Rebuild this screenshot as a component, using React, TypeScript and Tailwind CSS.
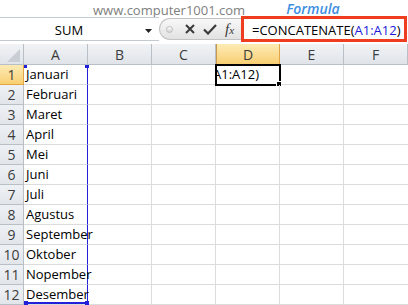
import React from "react";

const columns = ["A", "B", "C", "D", "E", "F"];
const months = [
  "Januari",
  "Februari",
  "Maret",
  "April",
  "Mei",
  "Juni",
  "Juli",
  "Agustus",
  "September",
  "Oktober",
  "Nopember",
  "Desember",
];

const App: React.FC = () => {
  return (
    <div className="w-[408px] h-[305px] overflow-hidden bg-white font-['Open_Sans',sans-serif] text-black">
      {/* caption */}
      <div className="h-[16px] flex items-start pl-[93px] leading-[16px]">
        <span className="mt-[2px] text-[13px] text-[#808080]">www.computer1001.com</span>
        <span className="ml-[41px] mt-[1px] text-[14px] leading-[15px] font-semibold italic text-[#3d8fe2]">Formula</span>
      </div>

      {/* formula bar */}
      <div className="flex h-[28px]">
        <div className="relative mt-[1px] h-[24px] w-[159px] border-y border-[#c5cad0] bg-white">
          <div className="w-[138px] pt-[3px] text-center text-[13px] leading-[18px]">SUM</div>
          <svg className="absolute left-[145px] top-[11px]" width="7" height="4" viewBox="0 0 7 4">
            <path d="M0 0 H7 L3.5 4 Z" fill="#222" />
          </svg>
        </div>
        <div className="mt-[2px] flex h-[22px] w-[82px] items-center rounded-l-[12px] border border-r-0 border-[#c2c2c2] bg-gradient-to-b from-[#f8f8f8] to-[#e2e2e2] pl-[6px]">
          <div className="h-[7px] w-[7px] rounded-full border border-[#bdbdbd] bg-gradient-to-b from-[#ffffff] to-[#d4d4d4]" />
          <svg className="ml-[12px]" width="10" height="10" viewBox="0 0 10 10">
            <path d="M1 1 L9 9 M9 1 L1 9" stroke="#3a3a3a" strokeWidth="2" />
          </svg>
          <svg className="ml-[8px]" width="14" height="11" viewBox="0 0 14 11">
            <path d="M1 5.5 L5 9.5 L13 1" stroke="#3a3a3a" strokeWidth="2.2" fill="none" />
          </svg>
          <span className="ml-[8px] font-['Liberation_Serif',serif] italic text-[#3a3a3a] leading-none">
            <span className="text-[15px]">f</span>
            <span className="text-[11px]">x</span>
          </span>
        </div>
        <div className="h-[26px] w-[166px] border-[3px] border-[#ef3d1f] bg-white pl-[8px] pt-[1px] text-[13px] leading-[20px] whitespace-nowrap">
          =CONCATENATE(<span className="text-[#1c1cd8]">A1:A12</span>)
        </div>
      </div>

      {/* column headers */}
      <div className="grid h-[21px] grid-cols-[24px_repeat(6,64px)]">
        <div className="flex items-end justify-end border-r border-b border-[#b9bfc6] bg-gradient-to-b from-[#f1f3f6] to-[#e0e4e9] pr-[3px] pb-[2px]">
          <svg width="13" height="13" viewBox="0 0 13 13">
            <path d="M13 0 V13 H0 Z" fill="#c9ced5" />
          </svg>
        </div>
        {columns.map((c) =>
          c === "D" ? (
            <div
              key={c}
              className="flex items-center justify-center border-x border-b border-[#e2a444] border-l-[#c99a4e] bg-gradient-to-b from-[#fdebb4] to-[#f8cf72] pt-[2px] text-[14px] leading-[18px] text-[#3c3c3c]"
            >
              {c}
            </div>
          ) : (
            <div
              key={c}
              className="flex items-center justify-center border-r border-b border-[#b9bfc6] bg-gradient-to-b from-[#f1f3f6] to-[#e0e4e9] pt-[2px] text-[14px] leading-[18px] text-[#3c3c3c]"
            >
              {c}
            </div>
          )
        )}
      </div>

      {/* rows */}
      {months.map((m, i) => (
        <div key={m} className="grid h-[20px] grid-cols-[24px_repeat(6,64px)] text-[13px] leading-[19px]">
          <div
            className={
              i === 0
                ? "border-r border-b border-[#e2a444] bg-gradient-to-b from-[#fdebb4] to-[#f8cf72] text-center text-[14px] text-[#3c3c3c]"
                : "border-r border-b border-[#b9bfc6] bg-gradient-to-b from-[#eef1f4] to-[#e2e6eb] text-center text-[14px] text-[#3c3c3c]"
            }
          >
            {i + 1}
          </div>
          <div className="relative whitespace-nowrap border-r border-b border-[#dadcdd] border-r-[#2121d9] pl-[2px]">
            {m}
            {i === 0 && (
              <>
                <div className="absolute left-0 top-0 h-[3px] w-[3px] bg-[#2121d9]" />
                <div className="absolute right-[-2px] top-0 h-[3px] w-[4px] bg-[#2121d9]" />
              </>
            )}
            {i === 11 && (
              <>
                <div className="absolute bottom-0 left-[1px] right-[-1px] h-[2px] bg-[#2121d9]" />
                <div className="absolute bottom-[-1px] left-0 h-[4px] w-[4px] bg-[#2121d9]" />
                <div className="absolute bottom-[-1px] right-[-2px] h-[4px] w-[4px] bg-[#2121d9]" />
              </>
            )}
          </div>
          <div className="border-r border-b border-[#dadcdd]" />
          <div className="border-r border-b border-[#dadcdd]" />
          <div className="relative border-r border-b border-[#dadcdd]">
            {i === 0 && (
              <>
                <div className="overflow-hidden whitespace-nowrap">
                  <span className="ml-[-3px] inline-block">A1:A12)</span>
                </div>
                <div className="absolute bottom-[-2px] left-[-1px] right-[-2px] top-[-1px] border-2 border-black" />
                <div className="absolute bottom-[-3px] right-[-3px] h-[6px] w-[6px] border border-white bg-black" />
              </>
            )}
          </div>
          <div className="border-r border-b border-[#dadcdd]" />
          <div className="border-b border-[#dadcdd]" />
        </div>
      ))}
    </div>
  );
};

export default App;
